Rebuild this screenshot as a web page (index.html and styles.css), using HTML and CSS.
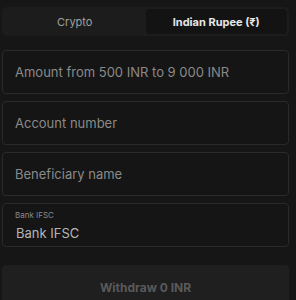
FILE: index.html
```html
<!DOCTYPE html>
<html>
<head>
<meta charset="utf-8">
<link rel="stylesheet" href="styles.css">
</head>
<body>
<div class="page">
  <div class="tabs">
    <div class="tab">Crypto</div>
    <div class="tab active">Indian Rupee (₹)</div>
  </div>
  <div class="fields">
    <div class="field"><span class="ph">Amount from 500 INR to 9 000 INR</span></div>
    <div class="field"><span class="ph">Account number</span></div>
    <div class="field"><span class="ph">Beneficiary name</span></div>
    <div class="field filled">
      <span class="label">Bank IFSC</span>
      <span class="value">Bank IFSC</span>
    </div>
  </div>
  <button class="submit">Withdraw 0 INR</button>
</div>
</body>
</html>
```
FILE: styles.css
```css
html, body {
  margin: 0;
  padding: 0;
  background: #161616;
}
body {
  font-family: Inter, "Noto Sans", sans-serif;
  width: 296px;
  height: 300px;
  overflow: hidden;
}
.page {
  padding: 7px 7px 0 2px;
  display: flex;
  flex-direction: column;
}
.tabs {
  display: flex;
  background: #1c1c1c;
  border-radius: 5px;
  padding: 2px;
  height: 29px;
  box-sizing: border-box;
}
.tab {
  flex: 1;
  display: flex;
  align-items: center;
  justify-content: center;
  font-size: 11px;
  font-weight: 400;
  color: #a0a0a0;
  border-radius: 4px;
}
.tab.active {
  background: #131313;
  color: #e6e6e6;
  font-weight: 700;
}
.fields {
  margin-top: 14px;
  display: flex;
  flex-direction: column;
  gap: 7px;
}
.field {
  height: 44px;
  box-sizing: border-box;
  border: 1px solid #2a2a2a;
  border-radius: 4px;
  background: #151515;
  display: flex;
  flex-direction: column;
  justify-content: center;
  padding: 0 12px;
}
.ph {
  font-size: 13px;
  color: #8a8a8a;
}
.filled {
  justify-content: flex-start;
  padding-top: 6px;
}
.label {
  font-size: 8px;
  color: #8a8a8a;
  line-height: 10px;
}
.value {
  font-size: 13px;
  color: #b5b5b5;
  margin-top: 5px;
  margin-left: 1px;
}
.submit {
  margin-top: 18px;
  height: 44px;
  border: none;
  border-radius: 4px;
  background: #1f1f1f;
  color: #5a5a5a;
  font-family: inherit;
  font-size: 12px;
  font-weight: 700;
}
```
